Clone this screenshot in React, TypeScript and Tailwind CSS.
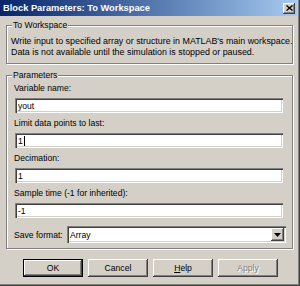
import React from "react";

const sunken =
  "bg-white shadow-[inset_1px_1px_#808080,inset_2px_2px_#404040,inset_-1px_-1px_#ffffff,inset_-2px_-2px_#d4d0c8]";
const raised =
  "bg-[#d4d0c8] shadow-[inset_-1px_-1px_#404040,inset_1px_1px_#ffffff,inset_-2px_-2px_#808080,inset_2px_2px_#d4d0c8]";
const etched =
  "border border-[#808080] shadow-[1px_1px_#ffffff,inset_1px_1px_#ffffff]";

function Field({ label, value, caret }: { label: string; value: string; caret?: boolean }) {
  return (
    <div className="flex flex-col">
      <div className="leading-[10px] h-[10px] whitespace-nowrap">{label}</div>
      <div className={`mt-[5px] ml-[1px] w-[268px] h-[15px] flex items-center pl-[3px] ${sunken}`}>
        <span className="leading-[10px]">{value}</span>
        {caret && <span className="ml-[1px] w-[1px] h-[10px] bg-black" />}
      </div>
    </div>
  );
}

function Btn({ children, def, disabled }: { children: React.ReactNode; def?: boolean; disabled?: boolean }) {
  const cls = def
    ? "bg-[#d4d0c8] shadow-[inset_0_0_0_1px_#000000,inset_-2px_-2px_#404040,inset_2px_2px_#ffffff,inset_-3px_-3px_#808080]"
    : raised;
  return (
    <div className={`w-[60px] h-[18px] flex items-center justify-center ${cls}`}>
      <span
        className={
          disabled
            ? "text-[#808080] [text-shadow:1px_1px_0_#ffffff] leading-[10px]"
            : "leading-[10px]"
        }
      >
        {children}
      </span>
    </div>
  );
}

export default function App() {
  return (
    <div className="w-[300px] h-[286px] bg-[#d4d0c8] flex flex-col overflow-hidden font-['Liberation_Sans',Arial,sans-serif] text-[8.6px] text-black shadow-[inset_-1px_-1px_#404040,inset_-2px_-2px_#808080]">
      {/* Title bar */}
      <div className="h-[16px] mr-[3px] flex items-center justify-between pl-[3px] pr-[2px] bg-linear-to-r from-[#0a246a] to-[#a6caf0]">
        <span className="text-white font-bold text-[9.3px] leading-[12px] whitespace-nowrap">
          Block Parameters: To Workspace
        </span>
        <div className={`w-[12px] h-[11px] flex items-center justify-center ${raised}`}>
          <svg width="7" height="6" viewBox="0 0 7 6">
            <path d="M0.5 0.5 L6.5 5.5 M6.5 0.5 L0.5 5.5" stroke="#000" strokeWidth="1.4" />
          </svg>
        </div>
      </div>

      {/* Group 1 */}
      <div className={`relative mt-[9px] ml-[6px] w-[287px] h-[39px] ${etched}`}>
        <span className="absolute left-[5px] top-[-6px] px-[1px] bg-[#d4d0c8] leading-[10px] whitespace-nowrap">
          To Workspace
        </span>
        <div className="pt-[10px] pl-[4px] leading-[11px] text-[8.9px] whitespace-nowrap">
          <div>Write input to specified array or structure in MATLAB's main workspace.</div>
          <div>Data is not available until the simulation is stopped or paused.</div>
        </div>
      </div>

      {/* Group 2 */}
      <div className={`relative mt-[11px] ml-[6px] w-[287px] h-[174px] ${etched}`}>
        <span className="absolute left-[5px] top-[-6px] px-[1px] bg-[#d4d0c8] leading-[10px] whitespace-nowrap">
          Parameters
        </span>
        <div className="pt-[7px] pl-[7px] flex flex-col gap-[5px]">
          <Field label="Variable name:" value="yout" />
          <Field label="Limit data points to last:" value="1" caret />
          <Field label="Decimation:" value="1" />
          <Field label="Sample time (-1 for inherited):" value="-1" />
          <div className="mt-[3px] flex items-center h-[17px]">
            <span className="w-[53px] leading-[10px] whitespace-nowrap">Save format:</span>
            <div className={`w-[219px] h-[17px] flex items-center justify-between pl-[3px] pr-[2px] ${sunken}`}>
              <span className="leading-[10px]">Array</span>
              <div className={`w-[13px] h-[13px] flex items-center justify-center ${raised}`}>
                <svg width="7" height="4" viewBox="0 0 7 4">
                  <path d="M0 0 L7 0 L3.5 4 Z" fill="#000" />
                </svg>
              </div>
            </div>
          </div>
        </div>
      </div>

      {/* Buttons */}
      <div className="mt-[10px] pl-[23px] flex gap-[5px]">
        <Btn def>OK</Btn>
        <Btn>Cancel</Btn>
        <Btn>
          <span className="underline">H</span>elp
        </Btn>
        <Btn disabled>Apply</Btn>
      </div>
    </div>
  );
}
